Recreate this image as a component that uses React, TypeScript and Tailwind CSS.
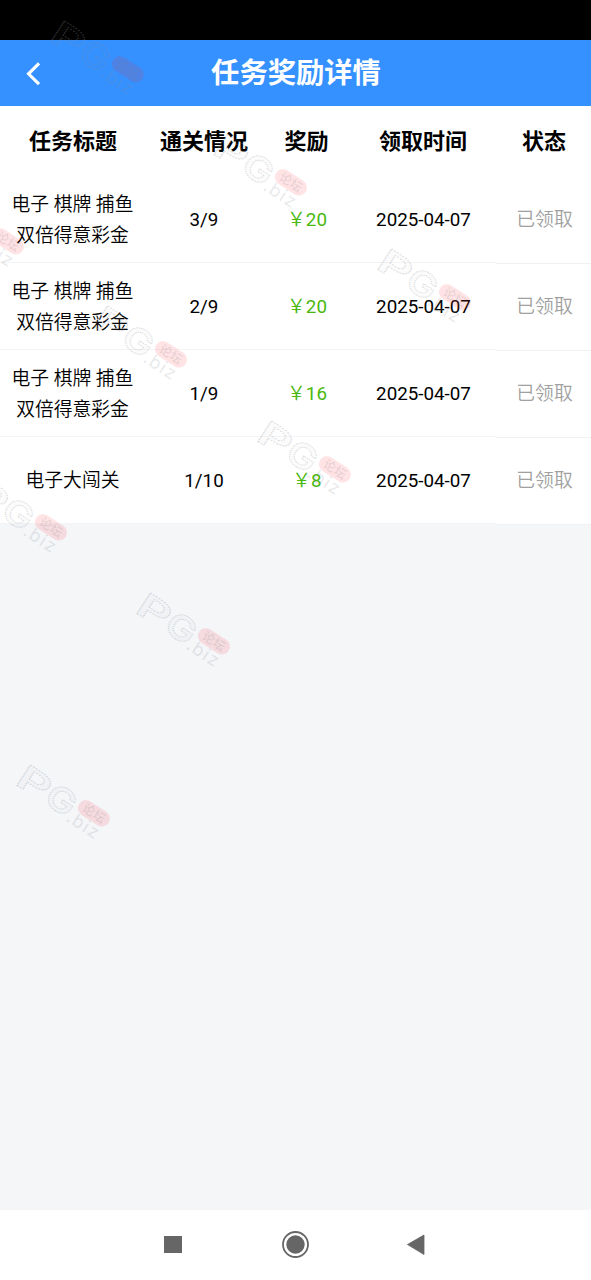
const rows = [
  { title: ["电子 棋牌 捕鱼", "双倍得意彩金"], progress: "3/9", reward: 20 },
  { title: ["电子 棋牌 捕鱼", "双倍得意彩金"], progress: "2/9", reward: 20 },
  { title: ["电子 棋牌 捕鱼", "双倍得意彩金"], progress: "1/9", reward: 16 },
  { title: ["电子大闯关"], progress: "1/10", reward: 8 },
];

const headers = ["任务标题", "通关情况", "奖励", "领取时间", "状态"];

const marks = [
  { x: 34, y: 8 },
  { x: 197, y: 121 },
  { x: -86, y: 180 },
  { x: 361, y: 236 },
  { x: 77, y: 293 },
  { x: 241, y: 408 },
  { x: -43, y: 466 },
  { x: 120, y: 580 },
  { x: 0, y: 752 },
];

function Watermark() {
  return (
    <svg width="120" height="100" viewBox="0 0 120 100" className="block">
      <g transform="translate(15.5 32.5) rotate(33)">
        <g
          fill="#8b8f98"
          fillOpacity="0.05"
          stroke="#8b8f98"
          strokeOpacity="0.36"
          strokeWidth="0.9"
          strokeDasharray="1.2 0.9"
          fontFamily="Inter, sans-serif"
          fontWeight="600"
          fontSize="34"
        >
          <text x="-2" y="0" textLength="34" lengthAdjust="spacingAndGlyphs">
            P
          </text>
          <text x="32" y="0" textLength="30" lengthAdjust="spacingAndGlyphs">
            G
          </text>
        </g>
        <text
          x="61"
          y="3"
          fill="#8b8f98"
          fillOpacity="0.2"
          fontFamily="Inter, sans-serif"
          fontSize="18"
          textLength="35"
        >
          .biz
        </text>
        <rect x="64" y="-26.5" width="35" height="16" rx="8" fill="#ff2638" fillOpacity="0.13" />
        <text
          x="81.5"
          y="-14"
          textAnchor="middle"
          fill="#777777"
          fillOpacity="0.18"
          fontFamily="'Noto Sans CJK SC', sans-serif"
          fontWeight="500"
          fontSize="12.5"
        >
          论坛
        </text>
      </g>
    </svg>
  );
}

function Header() {
  return (
    <header className="grid h-[66px] grid-cols-[66px_1fr_66px] items-center bg-[#3491ff] text-white">
      <svg width="66" height="66" viewBox="0 0 66 66" fill="none">
        <path d="M39 23.3 28.5 33.8 39 44.2" stroke="currentColor" strokeWidth="3.1" />
      </svg>
      <h1 className="pt-0.5 pl-px text-center text-[28.3px] leading-[64px] font-bold">任务奖励详情</h1>
    </header>
  );
}

function TaskTable() {
  return (
    <div className="bg-white text-center text-black">
      <div className="grid h-[70px] grid-cols-[146px_116px_89px_144px_98px] items-center text-[22px] font-bold">
        {headers.map((label) => (
          <div key={label}>{label}</div>
        ))}
      </div>
      {rows.map((row, index) => (
        <div
          key={index}
          className="grid h-[87px] grid-cols-[145px_118px_88px_145px_97px] grid-rows-[87px] text-[18.8px] leading-[31px]"
        >
          <div className="flex flex-col justify-center border-b border-[#f3f4f6] pt-[3px] font-[350]">
            {row.title.map((line) => (
              <p key={line}>{line}</p>
            ))}
          </div>
          <div className="flex items-center justify-center border-b border-[#f3f4f6] pt-0.5">
            {row.progress}
          </div>
          <div className="flex items-center justify-center border-b border-[#f3f4f6] pt-0.5 text-[#4ab80e]">
            <span className="font-[350]">￥</span>
            {row.reward}
          </div>
          <div className="flex items-center justify-center border-b border-[#f3f4f6] pt-0.5">
            2025-04-07
          </div>
          <div className="flex h-[88px] items-center justify-center border-b border-[#f0f1f3] pt-0.5 font-[350] text-[#a0a0a0]">
            已领取
          </div>
        </div>
      ))}
    </div>
  );
}

function NavBar() {
  return (
    <nav className="flex h-[70px] items-center justify-center bg-white text-[#666666]">
      <svg width="301" height="70" viewBox="0 0 301 70" fill="currentColor">
        <rect x="19" y="26" width="18" height="17" />
        <circle cx="150.5" cy="34.5" r="12.5" fill="none" stroke="currentColor" strokeWidth="1.8" />
        <circle cx="150.5" cy="34.5" r="9.2" />
        <path d="M262.5 34.5 279 25v19.5z" stroke="currentColor" strokeWidth="0.8" strokeLinejoin="round" />
      </svg>
    </nav>
  );
}

export default function App() {
  return (
    <div className="relative flex h-[1280px] w-[591px] flex-col overflow-hidden bg-[#f4f6f8] font-['Roboto','Noto_Sans_CJK_SC',sans-serif]">
      <div className="h-10 bg-black" />
      <Header />
      <main className="flex-1">
        <TaskTable />
      </main>
      <NavBar />

      {/* Watermark overlay */}
      <div className="pointer-events-none absolute inset-0">
        {marks.map((mark) => (
          <div key={mark.y} className="absolute" style={{ left: mark.x, top: mark.y }}>
            <Watermark />
          </div>
        ))}
      </div>
    </div>
  );
}
